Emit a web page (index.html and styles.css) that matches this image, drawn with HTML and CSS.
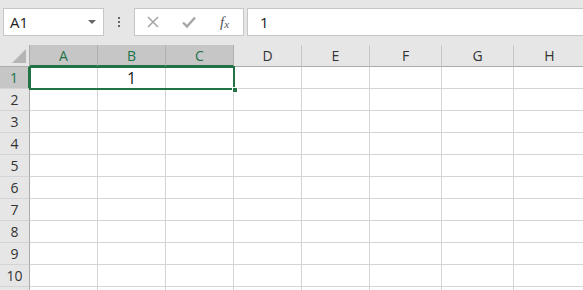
FILE: index.html
```html
<!DOCTYPE html>
<html>
<head>
<meta charset="utf-8">
<link rel="stylesheet" href="styles.css">
</head>
<body>
<div class="bar">
  <div class="namebox"><span>A1</span><span class="caret"></span></div>
  <div class="grip"><i></i><i></i><i></i></div>
  <div class="fxbox">
    <svg class="ic" width="16" height="16" viewBox="0 0 16 16"><path d="M3 3 L13 13 M13 3 L3 13" stroke="#a6a6a6" stroke-width="1.6" fill="none"/></svg>
    <svg class="ic" width="16" height="16" viewBox="0 0 16 16"><path d="M2 8.5 L6 12.5 L14 3.5" stroke="#a6a6a6" stroke-width="2.4" fill="none"/></svg>
    <span class="fx">f<sub>x</sub></span>
  </div>
  <div class="formula">1</div>
</div>
<div class="sheet">
  <div class="grid">
    <div class="corner"><span class="tri"></span></div>
    <div class="ch sel">A</div><div class="ch sel">B</div><div class="ch sel">C</div>
    <div class="ch">D</div><div class="ch">E</div><div class="ch">F</div><div class="ch">G</div><div class="ch">H</div>

    <div class="rh sel">1</div><div class="c"></div><div class="c val">1</div><div class="c"></div><div class="c"></div><div class="c"></div><div class="c"></div><div class="c"></div><div class="c"></div>
    <div class="rh">2</div><div class="c"></div><div class="c"></div><div class="c"></div><div class="c"></div><div class="c"></div><div class="c"></div><div class="c"></div><div class="c"></div>
    <div class="rh">3</div><div class="c"></div><div class="c"></div><div class="c"></div><div class="c"></div><div class="c"></div><div class="c"></div><div class="c"></div><div class="c"></div>
    <div class="rh">4</div><div class="c"></div><div class="c"></div><div class="c"></div><div class="c"></div><div class="c"></div><div class="c"></div><div class="c"></div><div class="c"></div>
    <div class="rh">5</div><div class="c"></div><div class="c"></div><div class="c"></div><div class="c"></div><div class="c"></div><div class="c"></div><div class="c"></div><div class="c"></div>
    <div class="rh">6</div><div class="c"></div><div class="c"></div><div class="c"></div><div class="c"></div><div class="c"></div><div class="c"></div><div class="c"></div><div class="c"></div>
    <div class="rh">7</div><div class="c"></div><div class="c"></div><div class="c"></div><div class="c"></div><div class="c"></div><div class="c"></div><div class="c"></div><div class="c"></div>
    <div class="rh">8</div><div class="c"></div><div class="c"></div><div class="c"></div><div class="c"></div><div class="c"></div><div class="c"></div><div class="c"></div><div class="c"></div>
    <div class="rh">9</div><div class="c"></div><div class="c"></div><div class="c"></div><div class="c"></div><div class="c"></div><div class="c"></div><div class="c"></div><div class="c"></div>
    <div class="rh">10</div><div class="c"></div><div class="c"></div><div class="c"></div><div class="c"></div><div class="c"></div><div class="c"></div><div class="c"></div><div class="c"></div>
    <div class="rh"></div><div class="c"></div><div class="c"></div><div class="c"></div><div class="c"></div><div class="c"></div><div class="c"></div><div class="c"></div><div class="c"></div>
  </div>
  <div class="selection"><span class="handle"></span></div>
</div>
</body>
</html>
```
FILE: styles.css
```css
* { box-sizing: border-box; }
html, body { margin: 0; padding: 0; }
body {
  width: 583px;
  height: 290px;
  overflow: hidden;
  background: #ffffff;
  font-family: "Segoe UI", "Open Sans", "Noto Sans", sans-serif;
}
.bar {
  height: 45px;
  background: #e6e6e6;
  display: flex;
  align-items: flex-start;
  padding: 8px 0 0 3px;
}
.namebox {
  width: 101px;
  height: 28px;
  background: #fff;
  border: 1px solid #c6c6c6;
  display: flex;
  align-items: center;
  justify-content: space-between;
  padding: 0 7px 0 6px;
  font-size: 15px;
  color: #222;
}
.caret {
  width: 0; height: 0;
  border-left: 4px solid transparent;
  border-right: 4px solid transparent;
  border-top: 4px solid #666;
}
.grip {
  width: 30px;
  height: 28px;
  display: flex;
  flex-direction: column;
  align-items: center;
  justify-content: center;
  gap: 2px;
}
.grip i {
  display: block;
  width: 2px;
  height: 2px;
  background: #666;
}
.fxbox {
  width: 110px;
  height: 28px;
  background: #fff;
  border: 1px solid #c6c6c6;
  display: flex;
  align-items: center;
  padding: 0 0 0 10px;
  gap: 20px;
}
.fx {
  font-family: "Liberation Serif", "DejaVu Serif", serif;
  font-style: italic;
  font-size: 15px;
  color: #555;
  margin-left: 3px;
}
.fx sub { font-size: 11px; vertical-align: -1px; }
.formula {
  flex: 1;
  margin-left: 3px;
  height: 28px;
  background: #fff;
  border: 1px solid #c6c6c6;
  border-right: none;
  font-size: 15px;
  color: #222;
  padding: 3px 0 0 12px;
}
.sheet {
  position: relative;
}
.grid {
  display: grid;
  grid-template-columns: 30px 68px 68px 68px 68px 68px 72px 72px 72px;
  grid-template-rows: 22px;
  grid-auto-rows: 22px;
  width: 586px;
}
.corner {
  background: #e6e6e6;
  border-right: 1px solid #ababab;
  border-bottom: 1px solid #ababab;
  position: relative;
}
.tri {
  position: absolute;
  right: 3px;
  bottom: 3px;
  width: 0; height: 0;
  border-left: 14px solid transparent;
  border-bottom: 14px solid #b5b5b5;
}
.ch {
  background: #e6e6e6;
  border-right: 1px solid #c8c8c8;
  border-bottom: 1px solid #ababab;
  font-size: 14px;
  color: #333;
  display: flex;
  align-items: center;
  justify-content: center;
}
.ch.sel {
  background: #c6c6c6;
  color: #217346;
  border-right-color: #b0b0b0;
  border-bottom: 2px solid #217346;
}
.rh {
  background: #e6e6e6;
  border-right: 1px solid #ababab;
  border-bottom: 1px solid #d4d4d4;
  font-size: 14px;
  color: #333;
  display: flex;
  align-items: center;
  justify-content: center;
}
.rh.sel {
  background: #c6c6c6;
  color: #217346;
  border-right: 2px solid #217346;
}
.c {
  border-right: 1px solid #d4d4d4;
  border-bottom: 1px solid #d4d4d4;
}
.val {
  font-size: 16px;
  color: #222;
  display: flex;
  align-items: center;
  justify-content: center;
}
.selection {
  position: absolute;
  left: 29px;
  top: 21px;
  width: 206px;
  height: 24px;
  border: 2px solid #217346;
}
.handle {
  position: absolute;
  right: -5px;
  bottom: -5px;
  width: 6px;
  height: 6px;
  background: #217346;
  border: 1px solid #fff;
}
```
